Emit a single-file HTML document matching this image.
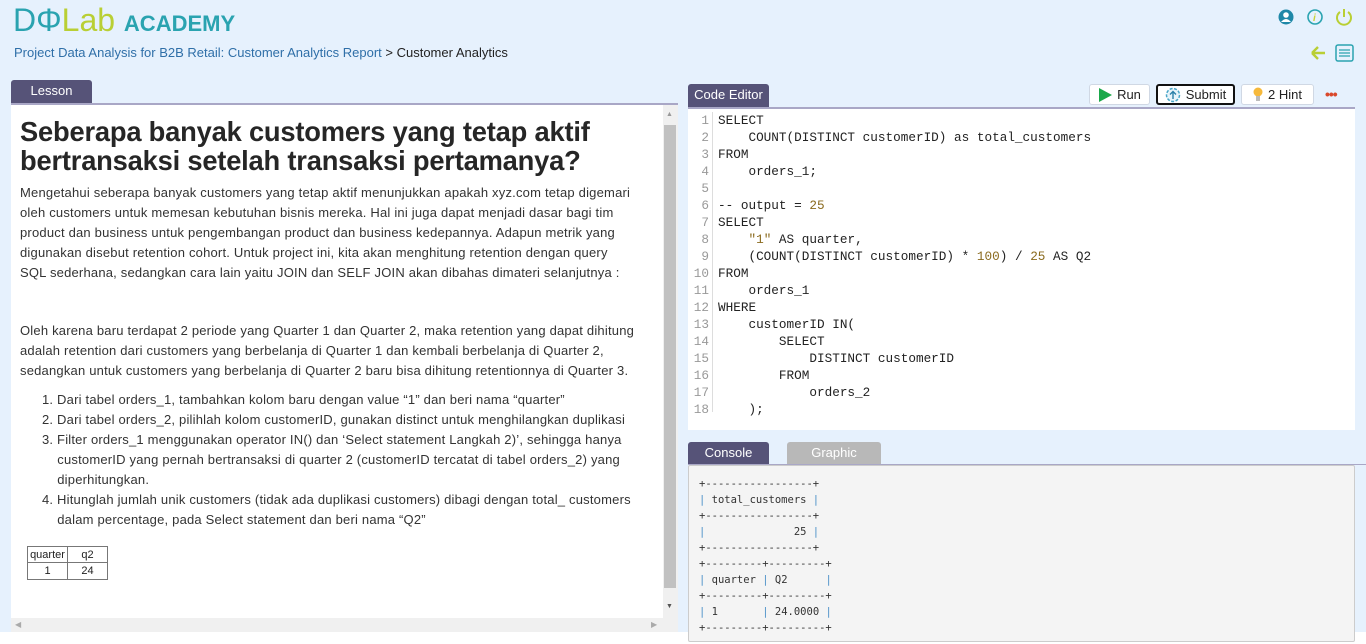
<!DOCTYPE html>
<html><head><meta charset="utf-8"><style>
*{margin:0;padding:0;box-sizing:border-box}
body{width:1366px;height:644px;overflow:hidden;background:#fff;font-family:"Liberation Sans",sans-serif;position:relative}
.bg{position:absolute;left:0;top:0;width:1366px;height:632px;background:#e6f1fd}
.abs{position:absolute}
.logo{left:13px;top:1px;font-size:32px;white-space:nowrap;line-height:38px}
.crumb{left:14px;top:45px;font-size:13px;color:#2f6fa8}
.tab{background:#565378;color:#fff;font-size:13px;text-align:center;border-radius:3px 3px 0 0}
.lesson{left:11px;top:103px;width:667px;height:529px;background:#fff;border-top:2px solid #a9a7c6}
.txt{font-size:13px;color:#333;line-height:20px;letter-spacing:0.2px;white-space:nowrap}
h1{font-size:27.3px;line-height:29px;color:#262626;font-weight:bold;letter-spacing:-0.2px}
.code{left:688px;top:107px;width:667px;height:323px;background:#fff;border-top:2px solid #a9a7c6;font-family:"Liberation Mono",monospace;font-size:12.7px;line-height:17px;color:#222}
.gut{position:absolute;left:0;top:3px;width:25px;text-align:right;color:#999;border-right:1px solid #ddd;padding-right:3px;height:300px}
.src{position:absolute;left:30px;top:3px;white-space:pre}
.n{color:#8b6b1f}
.btn{top:84px;height:21px;background:#fff;border:1px solid #d0d8e4;border-radius:3px;font-size:13px;color:#222;display:flex;align-items:center;justify-content:center;gap:5px}
.con{left:688px;top:465px;width:667px;height:177px;background:#f4f4f4;border:1px solid #ccc;border-radius:2px;font-family:"DejaVu Sans Mono",monospace;font-size:10.5px;line-height:16px;color:#333;white-space:pre;padding:10px 0 0 10px}
.con b{font-weight:normal;color:#4a90c8}
</style></head><body>
<div class="bg"></div>
<div class="abs logo"><span style="color:#2aa3b0">DΦ</span><span style="color:#b9cf34">Lab</span> <span style="color:#2aa3b0;font-size:22px;font-weight:bold;letter-spacing:0">ACADEMY</span></div>
<div class="abs crumb">Project Data Analysis for B2B Retail: Customer Analytics Report <span style="color:#222">&gt; Customer Analytics</span></div>
<svg class="abs" style="left:1277px;top:9px" width="80" height="18">
<circle cx="9" cy="8" r="7.5" fill="#1f88a8"/><circle cx="9" cy="6" r="2.8" fill="#fff"/><path d="M4 13 Q9 7 14 13" fill="#fff"/>
<circle cx="38" cy="8" r="7" fill="none" stroke="#2aa3b0" stroke-width="1.6"/><text x="36" y="12" font-size="10" font-style="italic" font-weight="bold" fill="#c8d238">i</text>
<path d="M63 3 A7 7 0 1 0 71 3" fill="none" stroke="#b9cf34" stroke-width="2"/><line x1="67" y1="0" x2="67" y2="8" stroke="#b9cf34" stroke-width="2"/>
</svg>
<svg class="abs" style="left:1310px;top:44px" width="46" height="20">
<path d="M2 9 H15 M2 9 L8 3 M2 9 L8 15" stroke="#b9cf34" stroke-width="2.4" fill="none"/>
<rect x="26" y="1" width="17" height="16" rx="2" fill="#e6f1fd" stroke="#2aa3b0" stroke-width="1.5"/>
<path d="M29 6 H40 M29 9 H40 M29 12 H40" stroke="#2aa3b0" stroke-width="1.3"/>
</svg>
<div class="abs tab" style="left:11px;top:80px;width:81px;height:23px;line-height:22px">Lesson</div>
<div class="abs lesson">
<div class="abs" style="left:652px;top:0;width:15px;height:527px;background:#f0f0f0"></div>
<div class="abs" style="left:653px;top:20px;width:12px;height:463px;background:#c1c1c1"></div>
<div class="abs" style="left:655px;top:6px;font-size:7px;color:#999">▲</div>
<div class="abs" style="left:655px;top:498px;font-size:7px;color:#555">▼</div>
<div class="abs" style="left:0;top:513px;width:652px;height:14px;background:#f0f0f0;font-size:8px;color:#aaa;padding:2px 4px">◀<span style="position:absolute;left:640px">▶</span></div>
<h1 class="abs" style="left:9px;top:12px">Seberapa banyak customers yang tetap aktif<br>bertransaksi setelah transaksi pertamanya?</h1>
<div class="abs txt" style="left:9px;top:78px">Mengetahui seberapa banyak customers yang tetap aktif menunjukkan apakah xyz.com tetap digemari<br>oleh customers untuk memesan kebutuhan bisnis mereka. Hal ini juga dapat menjadi dasar bagi tim<br>product dan business untuk pengembangan product dan business kedepannya. Adapun metrik yang<br>digunakan disebut retention cohort. Untuk project ini, kita akan menghitung retention dengan query<br>SQL sederhana, sedangkan cara lain yaitu JOIN dan SELF JOIN akan dibahas dimateri selanjutnya :</div>
<div class="abs txt" style="left:9px;top:216px">Oleh karena baru terdapat 2 periode yang Quarter 1 dan Quarter 2, maka retention yang dapat dihitung<br>adalah retention dari customers yang berbelanja di Quarter 1 dan kembali berbelanja di Quarter 2,<br>sedangkan untuk customers yang berbelanja di Quarter 2 baru bisa dihitung retentionnya di Quarter 3.</div>
<div class="abs txt" style="left:31px;top:285px">1. Dari tabel orders_1, tambahkan kolom baru dengan value “1” dan beri nama “quarter”<br>2. Dari tabel orders_2, pilihlah kolom customerID, gunakan distinct untuk menghilangkan duplikasi<br>3. Filter orders_1 menggunakan operator IN() dan ‘Select statement Langkah 2)’, sehingga hanya<br>&nbsp;&nbsp;&nbsp;&nbsp;customerID yang pernah bertransaksi di quarter 2 (customerID tercatat di tabel orders_2) yang<br>&nbsp;&nbsp;&nbsp;&nbsp;diperhitungkan.<br>4. Hitunglah jumlah unik customers (tidak ada duplikasi customers) dibagi dengan total_ customers<br>&nbsp;&nbsp;&nbsp;&nbsp;dalam percentage, pada Select statement dan beri nama “Q2”</div>
<table class="abs" style="left:16px;top:441px;border-collapse:collapse;font-size:11px;color:#222">
<tr><td style="border:1px solid #777;width:40px;text-align:center;height:16px">quarter</td><td style="border:1px solid #777;width:40px;text-align:center">q2</td></tr>
<tr><td style="border:1px solid #777;text-align:center;height:17px">1</td><td style="border:1px solid #777;text-align:center">24</td></tr></table>
</div>
<div class="abs tab" style="left:688px;top:84px;width:81px;height:23px;line-height:22px">Code Editor</div>
<div class="abs btn" style="left:1089px;width:61px"><svg width="14" height="14"><path d="M1 0 L14 7 L1 14Z" fill="#1aa84a"/></svg>Run</div>
<div class="abs btn" style="left:1156px;width:79px;border:2px solid #111"><svg width="16" height="16"><circle cx="8" cy="8" r="6.5" fill="#e8f4fa" stroke="#4aa6c8" stroke-width="1.5" stroke-dasharray="3 1.5"/><path d="M8 12 V5 M5 7.5 L8 4.5 L11 7.5" stroke="#2a7fa8" stroke-width="1.4" fill="none"/></svg>Submit</div>
<div class="abs btn" style="left:1241px;width:73px"><svg width="10" height="15"><circle cx="5" cy="5" r="4.5" fill="#f6b93b"/><rect x="3" y="9" width="4" height="5" fill="#bbb"/></svg>2 Hint</div>
<div class="abs" style="left:1325px;top:86px;color:#d9482b;font-size:14px;font-weight:bold;letter-spacing:-1px">•••</div>
<div class="abs code">
<div class="gut">1<br>2<br>3<br>4<br>5<br>6<br>7<br>8<br>9<br>10<br>11<br>12<br>13<br>14<br>15<br>16<br>17<br>18</div>
<div class="src">SELECT
    COUNT(DISTINCT customerID) as total_customers
FROM
    orders_1;

-- output = <span class="n">25</span>
SELECT
    <span class="n">"1"</span> AS quarter,
    (COUNT(DISTINCT customerID) * <span class="n">100</span>) / <span class="n">25</span> AS Q2
FROM
    orders_1
WHERE
    customerID IN(
        SELECT
            DISTINCT customerID
        FROM
            orders_2
    );</div>
</div>
<div class="abs tab" style="left:688px;top:442px;width:81px;height:23px;line-height:21px">Console</div>
<div class="abs tab" style="left:787px;top:442px;width:94px;height:23px;line-height:21px;background:#b8b8b8">Graphic</div>
<div class="abs" style="left:688px;top:464px;width:678px;height:1px;background:#a9a7c6"></div>
<div class="abs con">+-----------------+
<b>|</b> total_customers <b>|</b>
+-----------------+
<b>|</b>              25 <b>|</b>
+-----------------+
+---------+---------+
<b>|</b> quarter <b>|</b> Q2      <b>|</b>
+---------+---------+
<b>|</b> 1       <b>|</b> 24.0000 <b>|</b>
+---------+---------+</div>
</body></html>
